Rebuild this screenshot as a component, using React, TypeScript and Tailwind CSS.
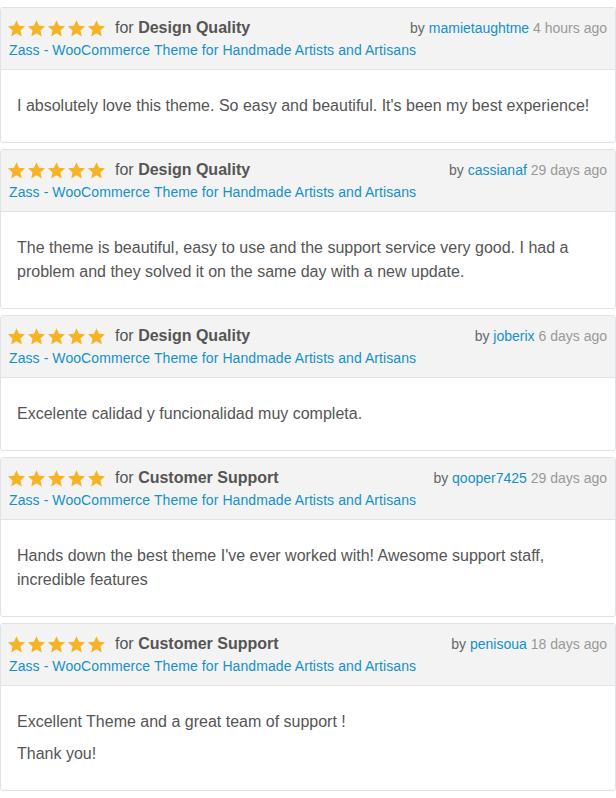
import React from "react";

interface Review {
  category: string;
  author: string;
  ago: string;
  body: string[];
}

const reviews: Review[] = [
  {
    category: "Design Quality",
    author: "mamietaughtme",
    ago: "4 hours ago",
    body: ["I absolutely love this theme. So easy and beautiful. It's been my best experience!"],
  },
  {
    category: "Design Quality",
    author: "cassianaf",
    ago: "29 days ago",
    body: [
      "The theme is beautiful, easy to use and the support service very good. I had a problem and they solved it on the same day with a new update.",
    ],
  },
  {
    category: "Design Quality",
    author: "joberix",
    ago: "6 days ago",
    body: ["Excelente calidad y funcionalidad muy completa."],
  },
  {
    category: "Customer Support",
    author: "qooper7425",
    ago: "29 days ago",
    body: ["Hands down the best theme I've ever worked with! Awesome support staff, incredible features"],
  },
  {
    category: "Customer Support",
    author: "penisoua",
    ago: "18 days ago",
    body: ["Excellent Theme and a great team of support !", "Thank you!"],
  },
];

function Star() {
  return (
    <svg width="19" height="19" viewBox="0 0 24 24" className="shrink-0">
      <path
        d="M12 1.5l3.1 7.1 7.7.7-5.8 5.1 1.7 7.6L12 18l-6.7 4 1.7-7.6-5.8-5.1 7.7-.7z"
        fill="#f6b324"
      />
    </svg>
  );
}

function ReviewCard({ review }: { review: Review }) {
  return (
    <div className="border border-[#dfe3e6] rounded-[3px] bg-white">
      {/* Header */}
      <div className="bg-[#f3f3f3] border-b border-[#dfe3e6] px-2 pt-2 pb-[9px]">
        <div className="flex items-center justify-between h-6">
          <div className="flex items-center -ml-[2px]">
            <div className="flex gap-[1px]">
              {[0, 1, 2, 3, 4].map((i) => (
                <Star key={i} />
              ))}
            </div>
            <span className="ml-[9px] text-[16px] text-[#555]">
              for <span className="font-bold">{review.category}</span>
            </span>
          </div>
          <div className="text-[14px] text-[#666]">
            by <span className="text-[#1591c6]">{review.author}</span>{" "}
            <span className="text-[#999]">{review.ago}</span>
          </div>
        </div>
        <div className="text-[14px] leading-5 text-[#1591c6] tracking-[0.08px]">
          Zass - WooCommerce Theme for Handmade Artists and Artisans
        </div>
      </div>
      {/* Body */}
      <div className="px-4 py-6 text-[16px] leading-6 text-[#555] flex flex-col gap-2">
        {review.body.map((p, i) => (
          <p key={i}>{p}</p>
        ))}
      </div>
    </div>
  );
}

export default function App() {
  return (
    <div
      className="w-[616px] bg-white pt-[7px] flex flex-col gap-[6px]"
      style={{ fontFamily: '"Liberation Sans", Arial, sans-serif' }}
    >
      {reviews.map((r, i) => (
        <ReviewCard key={i} review={r} />
      ))}
    </div>
  );
}
